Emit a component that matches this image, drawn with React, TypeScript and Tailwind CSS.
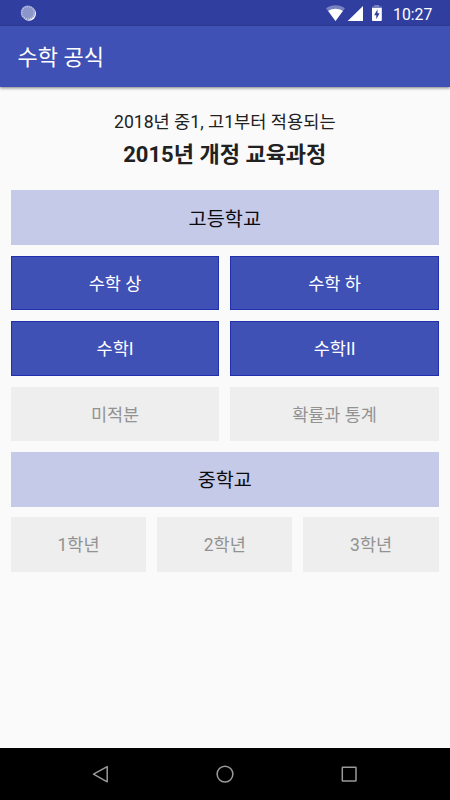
import React from 'react';

type Tone = 'active' | 'disabled';

function Tile({ label, tone }: { label: string; tone: Tone }) {
  const style =
    tone === 'active'
      ? 'bg-[#3f51b5] text-white border border-[#2330ae]'
      : 'bg-[#eeeeee] text-[#929292]';
  return (
    <button className={`flex h-[54.5px] min-w-0 flex-1 items-center justify-center pt-[3px] text-[17.5px] leading-none ${style}`}>
      <span>{label}</span>
    </button>
  );
}

function SectionHeader({ label }: { label: string }) {
  return (
    <h2 className="flex h-[54.5px] items-center justify-center bg-[#c5cae9] pt-[4px] text-[19.7px] leading-none text-[#0c0c0e]">
      <span>{label}</span>
    </h2>
  );
}

function Row({ items, tone }: { items: string[]; tone: Tone }) {
  return (
    <div className="flex gap-[10.94px]">
      {items.map((item) => (
        <Tile key={item} label={item} tone={tone} />
      ))}
    </div>
  );
}

function StatusBar() {
  return (
    <div className="flex h-[26px] shrink-0 items-center justify-between bg-[#303f9f] pr-[17px] pl-[20px] text-white">
      <svg width="17" height="17" viewBox="0 0 17 17">
        <circle cx="9" cy="8.8" r="7" fill="#fff" />
        <circle cx="7.9" cy="7.7" r="7.2" fill="#8c96cb" />
        <circle cx="7.9" cy="7.7" r="6.2" fill="none" stroke="#c4c9e6" strokeWidth="1.3" strokeDasharray="1 1.1" />
      </svg>
      <div className="flex items-center">
        <svg width="56" height="18" viewBox="0 0 56 18">
          <path d="M0 4.2C5.4 0.1 13.6 0.1 19 4.2L9.5 17Z" fill="#7883c1" />
          <path d="M2.2 7.1C6.4 4.1 12.6 4.1 16.8 7.1L9.5 17Z" fill="#fff" />
          <path d="M21.7 17L37 1.9V17Z" fill="#fff" />
          <path d="M46 4V2.4H48.2V1H53.2V2.4H55.8V4Z" fill="#7883c1" />
          <path d="M46 4H55.8V16.1Q55.8 17 54.9 17H46.9Q46 17 46 16.1Z" fill="#fff" />
          <path d="M51.5 5.3V9.2H53.6L50.3 15.3V11.2H48.2Z" fill="#303f9f" />
        </svg>
        <span className="ml-[11px] w-[40px] pt-[3px] whitespace-nowrap text-[15.8px] leading-none">10:27</span>
      </div>
    </div>
  );
}

function NavigationBar() {
  return (
    <nav className="h-[52.5px] shrink-0 bg-black">
      <svg width="450" height="52" viewBox="0 0 450 52" fill="none" stroke="#9a9a9a" strokeWidth="1.5" strokeLinejoin="round">
        <path d="M93.5 26.2L107.2 18.6V33.8Z" />
        <circle cx="225" cy="26.1" r="7.9" />
        <rect x="342.3" y="19.2" width="13.7" height="13.7" rx="0.5" />
      </svg>
    </nav>
  );
}

export default function App() {
  return (
    <div className="flex h-[800px] w-[450px] flex-col overflow-hidden bg-[#fafafa] font-['Roboto','Noto_Sans_CJK_KR',sans-serif]">
      <StatusBar />
      <header className="z-10 flex h-[61px] shrink-0 items-center bg-[#3f51b5] pt-[2px] pl-[17.5px] text-white shadow-[0_1px_3px_rgba(0,0,0,0.5)]">
        <h1 className="text-[22px] leading-none">수학 공식</h1>
      </header>
      <main className="flex flex-1 flex-col pt-[22px] pr-[11.2px] pl-[10.8px]">
        <div className="text-center text-[#212121]">
          <p className="text-[17.6px] leading-[27px]">2018년 중1, 고1부터 적용되는</p>
          <p className="mt-[2px] text-[22px] leading-[34px] font-bold">2015년 개정 교육과정</p>
        </div>
        <div className="mt-[18.3px] flex flex-col gap-[10.94px]">
          <SectionHeader label="고등학교" />
          <Row items={['수학 상', '수학 하']} tone="active" />
          <Row items={['수학I', '수학II']} tone="active" />
          <Row items={['미적분', '확률과 통계']} tone="disabled" />
          <SectionHeader label="중학교" />
          <Row items={['1학년', '2학년', '3학년']} tone="disabled" />
        </div>
      </main>
      <NavigationBar />
    </div>
  );
}
